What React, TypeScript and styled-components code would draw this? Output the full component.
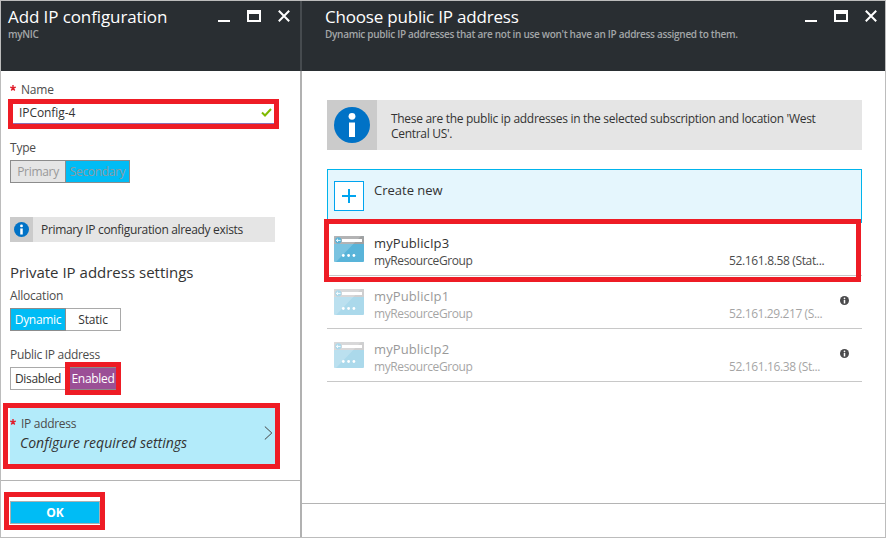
import React from "react";
import styled, { createGlobalStyle, css } from "styled-components";

const RED = "#ee1c25";
const CYAN = "#00bcf5";

const Global = createGlobalStyle`
  * { box-sizing: border-box; }
  body { margin: 0; background: #fff; font-family: "Open Sans", "Noto Sans", sans-serif; font-size: 12px; color: #333; }
  button, input { font-family: inherit; margin: 0; padding: 0; border-radius: 0; }
`;

const Page = styled.main`
  display: flex;
  width: 886px;
  height: 538px;
  border: 1px solid #bcbcbc;
  overflow: hidden;
`;

const Blade = styled.section<{ $w: number }>`
  display: flex;
  flex-direction: column;
  width: ${(p) => p.$w}px;
`;

const Divider = styled.div`
  width: 2px;
  background: linear-gradient(#464b4f 70px, #b1b1b1 70px);
`;

const Header = styled.header<{ $left: number; $right: number }>`
  display: flex;
  justify-content: space-between;
  height: 70px;
  padding: 6px ${(p) => p.$right}px 0 ${(p) => p.$left}px;
  background: #292e32;
`;

const Title = styled.h1<{ $track?: number }>`
  margin: 0;
  font-size: 17px;
  font-weight: 400;
  line-height: 20px;
  letter-spacing: ${(p) => p.$track ?? 0}px;
  white-space: nowrap;
  color: #fff;
`;

const Subtitle = styled.div`
  font-size: 10px;
  font-weight: 600;
  line-height: 15px;
  letter-spacing: -0.3px;
  white-space: nowrap;
  color: #a3a6a8;
`;

const Controls = styled.div`
  display: flex;
  gap: 17px;
  padding-top: 3px;
  svg { display: block; }
`;

const Body = styled.div<{ $pad: string }>`
  flex: 1;
  padding: ${(p) => p.$pad};
`;

const Footer = styled.footer<{ $h: number }>`
  height: ${(p) => p.$h}px;
  padding: 20px 9px 0;
  border-top: 1px solid #b4b4b4;
`;

interface LineProps {
  $h?: number;
  $size?: number;
  $color?: string;
  $track?: number;
  $italic?: boolean;
  $mt?: number;
}

const Line = styled.div<LineProps>`
  height: ${(p) => p.$h ?? 16}px;
  margin-top: ${(p) => p.$mt ?? 0}px;
  line-height: ${(p) => p.$h ?? 16}px;
  font-size: ${(p) => p.$size ?? 12}px;
  letter-spacing: ${(p) => p.$track ?? 0}px;
  color: ${(p) => p.$color ?? "#4c4c4c"};
  white-space: nowrap;
  ${(p) => p.$italic && css`font-style: italic;`}
`;

const Required = styled(Line)`
  position: relative;
  padding-left: 11px;
`;

const Star = styled.svg`
  position: absolute;
  left: 0;
  top: 3px;
`;

const Highlight = styled.div<{ $inset: string }>`
  position: absolute;
  inset: ${(p) => p.$inset};
  border: 5px solid ${RED};
  pointer-events: none;
`;

const Field = styled.div`
  position: relative;
  display: flex;
  align-items: center;
  justify-content: space-between;
  width: 265px;
  height: 22px;
  margin-top: 4px;
  padding: 0 3px 0 9px;
  border-bottom: 1px solid #8b6fb5;
`;

const NameInput = styled.input`
  width: 200px;
  height: 18px;
  border: 0;
  outline: 0;
  background: transparent;
  font-size: 12px;
  letter-spacing: -0.08px;
  color: #333;
`;

const Segments = styled.div`
  position: relative;
  display: flex;
  width: max-content;
  height: 23px;
  margin-top: 4px;
`;

const Segment = styled.button<{ $w: number; $bg?: string; $fg?: string; $edge?: string; $track?: number }>`
  width: ${(p) => p.$w}px;
  height: 23px;
  border: 1px solid ${(p) => p.$edge ?? "#a9a9a9"};
  background: ${(p) => p.$bg ?? "#fff"};
  color: ${(p) => p.$fg ?? "#333"};
  font-size: 12px;
  line-height: 21px;
  letter-spacing: ${(p) => p.$track ?? 0}px;
  white-space: nowrap;
  & + & { border-left: 0; }
`;

const Notice = styled.div<{ $w: number; $h: number; $icon: number; $mt?: number }>`
  display: grid;
  grid-template-columns: ${(p) => p.$icon}px 1fr;
  width: ${(p) => p.$w}px;
  height: ${(p) => p.$h}px;
  margin-top: ${(p) => p.$mt ?? 0}px;
  background: #e5e5e5;
`;

const NoticeIcon = styled.div`
  display: grid;
  place-items: center;
  background: #cbcbcb;
`;

const NoticeText = styled.p<{ $pad: string; $track: number }>`
  margin: 0;
  padding: ${(p) => p.$pad};
  line-height: 15px;
  letter-spacing: ${(p) => p.$track}px;
`;

const Selector = styled.button`
  position: relative;
  display: flex;
  justify-content: space-between;
  width: 265px;
  height: 56px;
  margin-top: 18px;
  padding: 8px 2px 0 0;
  border: 0;
  background: #b3ebfa;
  text-align: left;
`;

const Chevron = styled.svg`
  margin-top: 10px;
`;

const Value = styled(Line)`
  padding-left: 10px;
`;

const OkButton = styled.button`
  position: relative;
  width: 90px;
  height: 23px;
  border: 1px solid #a9b0b2;
  background: ${CYAN};
  color: #fff;
  font-size: 12px;
  font-weight: 700;
  line-height: 21px;
`;

const IpList = styled.div`
  margin-top: 19px;
`;

const CreateRow = styled.div`
  display: flex;
  gap: 10px;
  height: 54px;
  padding: 11px 6px 0;
  border: 1px solid #00b4ec;
  border-bottom: 0;
  background: #e5f6fd;
`;

const PlusBox = styled.div`
  display: grid;
  place-items: center;
  width: 30px;
  height: 30px;
  border: 1px solid #00a4ef;
  background: #fff;
`;

const IpRow = styled.div`
  position: relative;
  display: grid;
  grid-template-columns: 40px 355px 111px 1fr;
  height: 53px;
  padding: 12px 0 0 7px;
  border-bottom: 1px solid #c8c8c8;
`;

const Cell = styled.div<{ $dim?: boolean; $top?: number }>`
  padding-top: ${(p) => p.$top ?? 0}px;
  opacity: ${(p) => (p.$dim ? 0.5 : 1)};
  svg { display: block; }
`;

const WindowControls = () => (
  <Controls>
    <svg width="12" height="12"><path d="M0 11h12" stroke="#fff" strokeWidth="2" /></svg>
    <svg width="14" height="12"><path d="M0 0h14v12H0zM2 4v6h10V4z" fill="#fff" fillRule="evenodd" /></svg>
    <svg width="12" height="12"><path d="M.8 .8l10.4 10.4M11.2 .8L.8 11.2" stroke="#fff" strokeWidth="2" /></svg>
  </Controls>
);

const RequiredMark = () => (
  <Star width="6" height="6" viewBox="0 0 6 6">
    <path d="M3 3V0M3 3L.2 2.1M3 3l2.8-.9M3 3L1.3 5.5M3 3l1.7 2.5" stroke="#e01f2d" strokeWidth="1.4" fill="none" />
  </Star>
);

const InfoIcon = ({ size, color }: { size: number; color: string }) => (
  <svg width={size} height={size} viewBox="0 0 36 36">
    <circle cx="18" cy="18" r="18" fill={color} />
    <circle cx="18" cy="9.3" r="3.4" fill="#fff" />
    <path d="M15 15.5h6V30h-6z" fill="#fff" />
  </svg>
);

const IpIcon = () => (
  <svg width="30" height="26" viewBox="0 0 30 26">
    <rect width="30" height="26" rx="1" fill="#59b4d9" />
    <path d="M0 8V1a1 1 0 011-1h28a1 1 0 011 1v7z" fill="#a0a1a2" />
    <path d="M0 0h27L2 26H1a1 1 0 01-1-1z" fill="#fff" opacity=".2" />
    <path d="M8 3h20v3H8z" fill="#fff" />
    <circle cx="4.3" cy="4.4" r="3.1" fill="#59b4d9" />
    <path d="M6.5 4.4h-4M4 2.8L2.4 4.4 4 6" stroke="#fff" strokeWidth=".9" fill="none" />
    <circle cx="9.3" cy="19.5" r="1.4" fill="#fff" />
    <circle cx="14.6" cy="19.5" r="1.4" fill="#fff" />
    <circle cx="19.9" cy="19.5" r="1.4" fill="#fff" />
  </svg>
);

const addresses = [
  { name: "myPublicIp3", ip: "52.161.8.58 (Stat...", used: false, track: -0.35 },
  { name: "myPublicIp1", ip: "52.161.29.217 (S...", used: true, track: -0.4 },
  { name: "myPublicIp2", ip: "52.161.16.38 (St...", used: true, track: -0.37 },
];

export default function App() {
  return (
    <>
      <Global />
      <Page>
        <Blade $w={299}>
          <Header $left={7} $right={10}>
            <div>
              <Title $track={-0.1}>Add IP configuration</Title>
              <Subtitle>myNIC</Subtitle>
            </div>
            <WindowControls />
          </Header>
          <Body $pad="11px 9px 0">
            <Required $track={-0.2}><RequiredMark />Name</Required>
            <Field>
              <NameInput defaultValue="IPConfig-4" aria-label="Name" />
              <svg width="11" height="9"><path d="M1 4.5l3 3L10 1" stroke="#7fba00" strokeWidth="2" fill="none" /></svg>
              <Highlight $inset="-3px -4px -6px -2px" />
            </Field>
            <Line $mt={16} $track={-0.2}>Type</Line>
            <Segments>
              <Segment $w={56} $bg="#e5e5e5" $fg="#999" $edge="#8c8c8c" $track={-0.3}>Primary</Segment>
              <Segment $w={64} $bg={CYAN} $fg="#8a9ba3" $edge="#8c8c8c" $track={-0.35}>Secondary</Segment>
            </Segments>
            <Notice $w={265} $h={25} $icon={23} $mt={34}>
              <NoticeIcon><InfoIcon size={15} color="#0072c6" /></NoticeIcon>
              <NoticeText $pad="5px 0 0 8px" $track={-0.33}>Primary IP configuration already exists</NoticeText>
            </Notice>
            <Line $h={20} $mt={20} $size={15} $color="#333">Private IP address settings</Line>
            <Line $mt={6} $track={-0.2}>Allocation</Line>
            <Segments>
              <Segment $w={56} $bg={CYAN} $fg="#fff" $edge="#8c8c8c" $track={-0.3}>Dynamic</Segment>
              <Segment $w={55} $track={-0.2}>Static</Segment>
            </Segments>
            <Line $mt={16} $track={-0.3}>Public IP address</Line>
            <Segments>
              <Segment $w={56} $track={-0.3}>Disabled</Segment>
              <Segment $w={55} $bg="#9b4f96" $fg="#fff" $edge="#8c8c8c" $track={-0.3}>Enabled</Segment>
              <Highlight $inset="-5px 0 -5px 55px" />
            </Segments>
            <Selector>
              <div>
                <Required $track={-0.3}><RequiredMark />IP address</Required>
                <Value $mt={3} $size={14} $color="#333" $italic>Configure required settings</Value>
              </div>
              <Chevron width="9" height="14"><path d="M.8 .5L7.8 7l-7 6.5" stroke="#444" strokeWidth="1" fill="none" /></Chevron>
              <Highlight $inset="-5px -5px -5px -7px" />
            </Selector>
          </Body>
          <Footer $h={57}>
            <OkButton>OK<Highlight $inset="-10px -6px -7px -7px" /></OkButton>
          </Footer>
        </Blade>
        <Divider />
        <Blade $w={583}>
          <Header $left={23} $right={8}>
            <div>
              <Title $track={-0.2}>Choose public IP address</Title>
              <Subtitle>Dynamic public IP addresses that are not in use won't have an IP address assigned to them.</Subtitle>
            </div>
            <WindowControls />
          </Header>
          <Body $pad="29px 23px 0 25px">
            <Notice $w={535} $h={50} $icon={50}>
              <NoticeIcon><InfoIcon size={36} color="#0072c6" /></NoticeIcon>
              <NoticeText $pad="11px 20px 0 14px" $track={-0.3}>
                These are the public ip addresses in the selected subscription and location 'West Central US'.
              </NoticeText>
            </Notice>
            <IpList>
              <CreateRow>
                <PlusBox><svg width="14" height="14"><path d="M7 0v14M0 7h14" stroke="#00a4ef" strokeWidth="2" /></svg></PlusBox>
                <Line $h={18} $size={13} $color="#333">Create new</Line>
              </CreateRow>
              {addresses.map((a) => (
                <IpRow key={a.name}>
                  <Cell $dim={a.used} $top={1}><IpIcon /></Cell>
                  <Cell $dim={a.used}>
                    <Line $size={13} $color="#333" $track={0.1}>{a.name}</Line>
                    <Line $mt={1} $h={18} $track={-0.4}>myResourceGroup</Line>
                  </Cell>
                  <Cell $dim={a.used} $top={17}><Line $h={18} $track={a.track}>{a.ip}</Line></Cell>
                  {a.used && <Cell $top={8}><InfoIcon size={9} color="#4b4b4d" /></Cell>}
                  {!a.used && <Highlight $inset="-4px 1px -7px -3px" />}
                </IpRow>
              ))}
            </IpList>
          </Body>
          <Footer $h={34} />
        </Blade>
      </Page>
    </>
  );
}
